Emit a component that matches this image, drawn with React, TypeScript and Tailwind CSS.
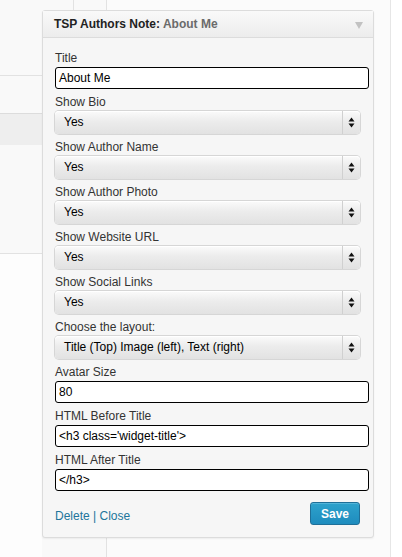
import React from "react";

const font = { fontFamily: '"Liberation Sans", Arial, Helvetica, sans-serif' };

function Label({ children }: { children: React.ReactNode }) {
  return <div className="h-[17px] leading-[17px] text-[12px] text-[#333]">{children}</div>;
}

function TextInput({ value }: { value: string }) {
  return (
    <div className="h-[22px] w-[314px] rounded-[3px] border border-black bg-white pl-[3px] text-[12px] leading-[20px] text-black">
      {value}
    </div>
  );
}

function Arrows() {
  return (
    <svg width="7" height="11" viewBox="0 0 7 11">
      <path d="M3.5 0.5 L6.5 4.5 L0.5 4.5 Z" fill="#111" />
      <path d="M3.5 10.5 L6.5 6.5 L0.5 6.5 Z" fill="#111" />
    </svg>
  );
}

function Select({ value }: { value: string }) {
  return (
    <div className="flex h-[23px] w-[305px] items-center rounded-[4px] bg-[linear-gradient(#fbfbfb,#ececec_45%,#e2e2e2)] shadow-[0_0_0_1px_#d6d6d6,inset_0_1px_0_#fff] text-[12px] text-black">
      <div className="flex-1 pl-[9px] leading-[23px]">{value}</div>
      <div className="h-full w-px bg-[#d0d0d0]" />
      <div className="flex w-[17px] items-center justify-center">
        <Arrows />
      </div>
    </div>
  );
}

function Field({ label, children }: { label: string; children: React.ReactNode }) {
  return (
    <div className="mb-[5px]">
      <Label>{label}</Label>
      {children}
    </div>
  );
}

export default function App() {
  return (
    <div className="relative h-[557px] w-[402px] overflow-hidden bg-[#f9f9f9]" style={font}>
      {/* background page fragments */}
      <div className="absolute left-[73px] top-0 h-[12px] w-px bg-[#e2e2e2]" />
      <div className="absolute left-[106px] top-0 h-[557px] w-px bg-[#e2e2e2]" />
      <div className="absolute left-[107px] top-0 h-[557px] w-[283px] bg-[#fbfbfb]" />
      <div className="absolute left-0 top-[75px] h-px w-[42px] bg-[#e2e2e2]" />
      <div className="absolute left-0 top-[113px] h-[32px] w-[42px] border-t border-[#dcdcdc] bg-[#eeeeee]" />
      <div className="absolute left-0 top-[253px] h-px w-[42px] bg-[#e2e2e2]" />
      <div className="absolute left-0 top-[254px] h-[303px] w-[42px] bg-[#fdfdfd]" />
      <div className="absolute left-[390px] top-0 h-[557px] w-px bg-[#e6e6e6]" />
      <div className="absolute left-[391px] top-0 h-[557px] w-[11px] bg-white" />

      <div className="relative ml-[42px] mt-[10px] w-[332px] rounded-[3px] border border-[#dcdcdc] bg-[#f6f6f6] shadow-[0_1px_2px_rgba(0,0,0,0.06)]">
        <div className="flex h-[27px] items-center justify-between border-b border-[#dcdcdc] bg-[linear-gradient(#f9f9f9,#ececec)] pl-[11px] pr-[10px] text-[12px] font-bold">
          <div>
            <span className="text-[#222]">TSP Authors Note:</span>{" "}
            <span className="text-[#6b6b6b]">About Me</span>
          </div>
          <svg width="8" height="7" viewBox="0 0 8 7" className="mt-[2px]">
            <path d="M0 0 L8 0 L4 7 Z" fill="#c2c2c2" />
          </svg>
        </div>
        <div className="px-[12px] pt-[12px]">
          <Field label="Title">
            <TextInput value="About Me" />
          </Field>
          <Field label="Show Bio">
            <Select value="Yes" />
          </Field>
          <Field label="Show Author Name">
            <Select value="Yes" />
          </Field>
          <Field label="Show Author Photo">
            <Select value="Yes" />
          </Field>
          <Field label="Show Website URL">
            <Select value="Yes" />
          </Field>
          <Field label="Show Social Links">
            <Select value="Yes" />
          </Field>
          <Field label="Choose the layout:">
            <Select value="Title (Top) Image (left), Text (right)" />
          </Field>
          <Field label="Avatar Size">
            <TextInput value="80" />
          </Field>
          <Field label="HTML Before Title">
            <TextInput value="<h3 class='widget-title'>" />
          </Field>
          <Field label="HTML After Title">
            <TextInput value="</h3>" />
          </Field>
          <div className="flex items-center justify-between pb-[12px] pt-[6px]">
            <div className="pt-[5px] text-[12px] text-[#21759b]">
              Delete <span>|</span> Close
            </div>
            <div className="mr-[1px] flex h-[23px] w-[50px] items-center justify-center rounded-[3px] border border-[#1f6f98] bg-[linear-gradient(#2ea2cc,#1e8cbe)] text-[12px] font-bold text-white shadow-[inset_0_1px_0_rgba(120,200,230,0.5)]">
              Save
            </div>
          </div>
        </div>
      </div>
    </div>
  );
}
